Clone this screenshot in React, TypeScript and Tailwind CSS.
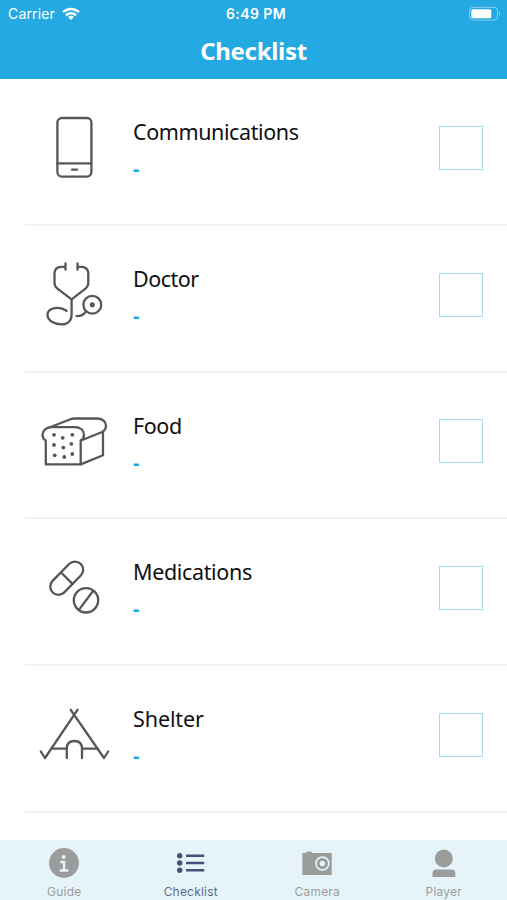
import { useState, type ReactNode } from "react";

type Item = {
  title: string;
  titleClass: string;
  icon: ReactNode;
};

type Tab = {
  label: string;
  icon: ReactNode;
};

function ItemIcon({ children }: { children: ReactNode }) {
  return (
    <svg
      viewBox="0 0 80 80"
      className="mt-[28px] h-[80px] w-[80px] shrink-0 stroke-[#54575a]"
      fill="none"
      strokeWidth="2.3"
      strokeLinecap="round"
      strokeLinejoin="round"
    >
      {children}
    </svg>
  );
}

const breadDots = [
  [19, 33.8],
  [27.7, 36.8],
  [37.3, 33.8],
  [19, 44],
  [28.3, 46.6],
  [36.3, 42.8],
  [19.7, 54.3],
  [29.3, 56],
  [37.3, 53],
];

const items: Item[] = [
  {
    title: "Communications",
    titleClass: "tracking-[-0.4px]",
    icon: (
      <ItemIcon>
        <rect x="22.4" y="11" width="34" height="58.6" rx="4.5" />
        <path d="M22.4 56.3h34M37 62.7h5" />
      </ItemIcon>
    ),
  },
  {
    title: "Doctor",
    titleClass: "tracking-[-0.5px]",
    icon: (
      <ItemIcon>
        <path d="M30.5 9.3v6.4M30.5 12.8h-4.7a6.3 6.3 0 0 0-6.3 6.3v9.5c0 3 1.2 5 3.6 6.6l13.5 10.2l13.2-10.2c2.4-1.6 3.5-3.6 3.5-6.6v-9.5a6.3 6.3 0 0 0-6.3-6.3h-4.5M42.5 9.3v6.4" />
        <path d="M36.6 45.4v15c0 6-3.6 10-9.9 10c-7.5 0-14.2-4-14.2-9.4c0-8 12.5-9 19-4.2" />
        <circle cx="57.3" cy="50.7" r="8.9" />
        <circle cx="57.3" cy="50.7" r="1.4" fill="#54575a" />
        <path d="M50.8 57.2c-1.5 3.4-4.5 4.9-9.3 4.9" />
      </ItemIcon>
    ),
  },
  {
    title: "Food",
    titleClass: "tracking-[-0.4px]",
    icon: (
      <ItemIcon>
        <path d="M10.8 63.4V39.5c-2.2-1.2-3.3-3.3-3.3-5.7c0-4.5 3.7-7.7 9.5-7.7h22.5c6 0 9.5 3.2 9.5 7.7c0 2.4-1.1 4.5-3.3 5.7v23.9z" />
        <path d="M15 26.2L35.5 18.2c1.5-.5 2.5-.7 4-.7h22.5c5.5 0 9 3.2 9 7.2c0 3-1.5 5.2-4.5 6.5L46 39.5M68 30.6v23.6L45.7 63.4" />
        {breadDots.map(([cx, cy]) => (
          <circle key={`${cx}-${cy}`} cx={cx} cy={cy} r="1.9" fill="#54575a" stroke="none" />
        ))}
      </ItemIcon>
    ),
  },
  {
    title: "Medications",
    titleClass: "tracking-[-0.35px]",
    icon: (
      <ItemIcon>
        <rect x="11.7" y="23" width="40" height="16.4" rx="8.2" transform="rotate(-45.5 31.7 31.2)" />
        <path d="M26.3 25.7l11.2 11.2" />
        <circle cx="51" cy="53.3" r="12.2" />
        <path d="M57.8 44.2L44.3 62.4" />
      </ItemIcon>
    ),
  },
  {
    title: "Shelter",
    titleClass: "tracking-[-0.1px]",
    icon: (
      <ItemIcon>
        <path d="M42.5 15.8L10 64l-4.2-6.5M35.7 15.8L69 64l4.2-6.5" />
        <path d="M16.2 54.6H31.8M47 54.6H62.8" />
        <path d="M31.8 64V54.6c0-4.8 2.8-7.6 7.6-7.6s7.6 2.8 7.6 7.6V64" />
      </ItemIcon>
    ),
  },
];

const tabs: Tab[] = [
  {
    label: "Guide",
    icon: (
      <svg viewBox="0 0 32 32" className="h-8 w-8">
        <circle cx="16" cy="16" r="14.9" fill="#9b9d9d" />
        <circle cx="15.6" cy="10" r="2" fill="#e6f4f9" />
        <path d="M12.3 13.8h5v8.5h3v2.5h-8.4v-2.5h3v-6h-2.6z" fill="#e6f4f9" />
      </svg>
    ),
  },
  {
    label: "Checklist",
    icon: (
      <svg viewBox="0 0 32 32" className="h-8 w-8" fill="#46507c">
        <circle cx="4.7" cy="8.7" r="2.7" />
        <circle cx="4.7" cy="16" r="2.7" />
        <circle cx="4.7" cy="23.3" r="2.7" />
        <path d="M11 7.5h18.2v2.5H11zM11 14.8h18.2v2.5H11zM11 22.1h18.2v2.5H11z" />
      </svg>
    ),
  },
  {
    label: "Camera",
    icon: (
      <svg viewBox="0 0 32 32" className="h-8 w-8" fill="#9b9d9d">
        <path d="M1.3 6h3.5l1-1.6h4.5l1 1.6h19.4v22H1.3z" />
        <circle cx="21.4" cy="16.5" r="6.4" fill="none" stroke="#e6f4f9" strokeWidth="1.7" />
        <circle cx="21.4" cy="16.5" r="2.7" fill="#e6f4f9" />
      </svg>
    ),
  },
  {
    label: "Player",
    icon: (
      <svg viewBox="0 0 32 32" className="h-8 w-8" fill="#9b9d9d">
        <circle cx="15.8" cy="11.5" r="9" />
        <path d="M4.5 30v-3.7c0-2.6 1.2-3.8 3.8-3.8h15.2c2.6 0 3.8 1.2 3.8 3.8V30z" />
      </svg>
    ),
  },
];

function StatusBar() {
  return (
    <div className="grid h-[27px] grid-cols-3 items-center pr-[6px] pl-[8px] font-['Inter',sans-serif] text-[14px] text-white">
      <div className="flex items-center gap-[7px]">
        <span className="tracking-[0.15px]">Carrier</span>
        <svg viewBox="0 0 18 14" className="h-[14px] w-[18px]" fill="none" stroke="white" strokeWidth="2.3">
          <path d="M1 5.2a11.6 11.6 0 0 1 16 0M3.9 8.3a7.4 7.4 0 0 1 10.2 0" />
          <path d="M9 13l-2.9-2.9a4.2 4.2 0 0 1 5.8 0z" fill="white" stroke="none" />
        </svg>
      </div>
      <span className="pl-[3px] text-center text-[14px] font-semibold tracking-[0.4px] whitespace-nowrap">
        6:49 PM
      </span>
      <svg viewBox="0 0 33 15" className="h-[15px] w-[33px] justify-self-end">
        <rect x="1.5" y="1.3" width="28" height="12.8" rx="3.5" fill="none" stroke="white" strokeOpacity=".45" />
        <rect x="3.3" y="3.2" width="20" height="9" rx="1.5" fill="white" />
        <path d="M31 5.5q2 2.2 0 4.4z" fill="white" fillOpacity=".5" />
      </svg>
    </div>
  );
}

export default function App() {
  const [checked, setChecked] = useState<string[]>([]);
  const [activeTab, setActiveTab] = useState("Checklist");

  const toggle = (title: string) => {
    setChecked((prev) =>
      prev.includes(title) ? prev.filter((t) => t !== title) : [...prev, title]
    );
  };

  return (
    <div className="flex h-[900px] w-[507px] flex-col overflow-hidden bg-white font-['Noto_Sans',sans-serif]">
      <header className="h-[79.4px] shrink-0 bg-[#25a9e2]">
        <StatusBar />
        <h1 className="text-center text-[24px] leading-[48px] font-bold tracking-[-0.3px] text-white">
          Checklist
        </h1>
      </header>

      <ul className="min-h-0 flex-1 overflow-hidden">
        {items.map((item) => (
          <li key={item.title} className="flex h-[146.67px] flex-col">
            <div className="flex flex-1 pl-[35px]">
              {item.icon}
              <div className="ml-[18px] flex-1 pt-[37px]">
                <p className={`text-[21.5px] leading-[32px] text-[#111] ${item.titleClass}`}>
                  {item.title}
                </p>
                <p className="mt-[5px] text-[20px] leading-[32px] font-bold text-[#1fa9dc]">-</p>
              </div>
              <button
                type="button"
                aria-label={item.title}
                onClick={() => toggle(item.title)}
                className={`mt-[46.6px] mr-[24px] h-[44px] w-[44px] border border-[#a4daf1] ${
                  checked.includes(item.title) ? "bg-[#25a9e2]" : "bg-white"
                }`}
              />
            </div>
            <div className="ml-[25px] h-[2px] bg-[#f1f1f2]" />
          </li>
        ))}
      </ul>

      <nav className="grid h-[60px] shrink-0 grid-cols-4 bg-[#e6f4f9] pl-px">
        {tabs.map((tab) => (
          <button
            key={tab.label}
            type="button"
            onClick={() => setActiveTab(tab.label)}
            className={`flex flex-col items-center pt-[7px] font-['Inter',sans-serif] text-[12px] leading-[26px] tracking-[0.2px] ${
              activeTab === tab.label ? "text-[#5f6b8c]" : "text-[#9b9d9d]"
            }`}
          >
            {tab.icon}
            {tab.label}
          </button>
        ))}
      </nav>
    </div>
  );
}
